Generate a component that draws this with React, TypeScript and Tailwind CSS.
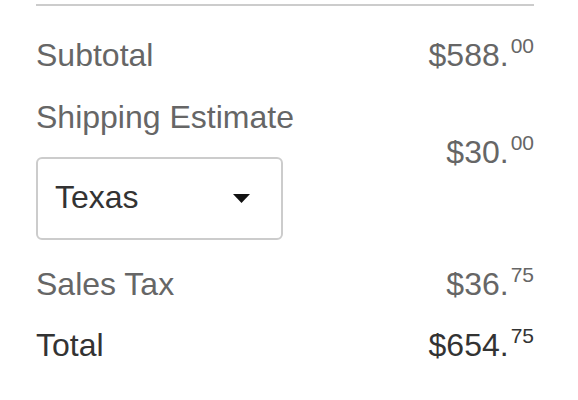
import React from "react";

function Price({ whole, cents, dark }: { whole: string; cents: string; dark?: boolean }) {
  return (
    <div className={`text-right whitespace-nowrap ${dark ? "text-[#333333]" : "text-[#666666]"}`}>
      <span>{whole}.</span>
      <span className="relative -top-[13px] ml-[2px] text-[21px] leading-none">{cents}</span>
    </div>
  );
}

export default function App() {
  return (
    <div
      className="w-[578px] h-[400px] bg-white"
      style={{ fontFamily: '"Liberation Sans", Arial, sans-serif' }}
    >
      <div className="ml-[36px] w-[498px] pt-[4px] text-[32px] leading-[36px]">
        <div className="h-[2px] bg-[#cccccc]" />

        <div className="mt-[31px] flex items-start justify-between">
          <div className="text-[#666666]">Subtotal</div>
          <Price whole="$588" cents="00" />
        </div>

        <div className="mt-[26px] flex items-start justify-between">
          <div className="flex flex-col">
            <div className="text-[#666666]">Shipping Estimate</div>
            <div className="mt-[22px] flex h-[83px] w-[247px] items-center justify-between rounded-[6px] border-2 border-[#cccccc] pb-[3px] pl-[17px] pr-[31px] text-[#333333]">
              <span>Texas</span>
              <svg width="17" height="9" viewBox="0 0 17 9" className="mt-[3px]">
                <polygon points="0,0 17,0 8.5,9" fill="#111111" />
              </svg>
            </div>
          </div>
          <div className="mt-[35px]">
            <Price whole="$30" cents="00" />
          </div>
        </div>

        <div className="mt-[26px] flex items-start justify-between">
          <div className="text-[#666666]">Sales Tax</div>
          <Price whole="$36" cents="75" />
        </div>

        <div className="mt-[25px] flex items-start justify-between">
          <div className="text-[#333333]">Total</div>
          <Price whole="$654" cents="75" dark />
        </div>
      </div>
    </div>
  );
}
